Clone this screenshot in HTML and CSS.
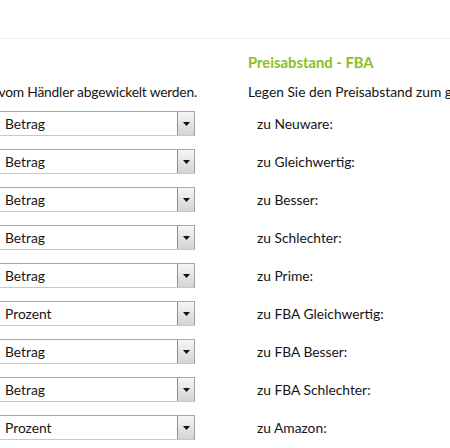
FILE: index.html
```html
<!DOCTYPE html>
<html lang="de">
<head>
<meta charset="utf-8">
<link rel="stylesheet" href="styles.css">
</head>
<body>
<div class="top"></div>
<div class="content">
  <section class="col col-left">
    <div class="heading-space"></div>
    <p class="desc"><span>Legen Sie den Preisabstand zu Angeboten fest, die vom Händler abgewickelt werden.</span></p>
    <div class="rows">
      <div class="select"><span class="val">Betrag</span><span class="btn"><svg width="7" height="4" viewBox="0 0 7 4"><path d="M0 0h7L3.5 4z" fill="#111"/></svg></span></div>
      <div class="select"><span class="val">Betrag</span><span class="btn"><svg width="7" height="4" viewBox="0 0 7 4"><path d="M0 0h7L3.5 4z" fill="#111"/></svg></span></div>
      <div class="select"><span class="val">Betrag</span><span class="btn"><svg width="7" height="4" viewBox="0 0 7 4"><path d="M0 0h7L3.5 4z" fill="#111"/></svg></span></div>
      <div class="select"><span class="val">Betrag</span><span class="btn"><svg width="7" height="4" viewBox="0 0 7 4"><path d="M0 0h7L3.5 4z" fill="#111"/></svg></span></div>
      <div class="select"><span class="val">Betrag</span><span class="btn"><svg width="7" height="4" viewBox="0 0 7 4"><path d="M0 0h7L3.5 4z" fill="#111"/></svg></span></div>
      <div class="select"><span class="val">Prozent</span><span class="btn"><svg width="7" height="4" viewBox="0 0 7 4"><path d="M0 0h7L3.5 4z" fill="#111"/></svg></span></div>
      <div class="select"><span class="val">Betrag</span><span class="btn"><svg width="7" height="4" viewBox="0 0 7 4"><path d="M0 0h7L3.5 4z" fill="#111"/></svg></span></div>
      <div class="select"><span class="val">Betrag</span><span class="btn"><svg width="7" height="4" viewBox="0 0 7 4"><path d="M0 0h7L3.5 4z" fill="#111"/></svg></span></div>
      <div class="select"><span class="val">Prozent</span><span class="btn"><svg width="7" height="4" viewBox="0 0 7 4"><path d="M0 0h7L3.5 4z" fill="#111"/></svg></span></div>
    </div>
  </section>
  <section class="col col-right">
    <h3 class="heading">Preisabstand - FBA</h3>
    <p class="desc">Legen Sie den Preisabstand zum günstigsten Angebot fest, das von Amazon versendet wird.</p>
    <div class="rows">
      <div class="label">zu Neuware:</div>
      <div class="label">zu Gleichwertig:</div>
      <div class="label">zu Besser:</div>
      <div class="label">zu Schlechter:</div>
      <div class="label">zu Prime:</div>
      <div class="label">zu FBA Gleichwertig:</div>
      <div class="label">zu FBA Besser:</div>
      <div class="label">zu FBA Schlechter:</div>
      <div class="label">zu Amazon:</div>
    </div>
  </section>
</div>
</body>
</html>
```

FILE: styles.css
```css
html, body {
  margin: 0;
  padding: 0;
  background: #fff;
  overflow: hidden;
  width: 450px;
  height: 448px;
}
body {
  font-family: "Lato", "Liberation Sans", sans-serif;
  font-size: 13.8px;
  color: #151515;
}
.top {
  height: 38px;
  border-bottom: 1px solid #eeeeee;
}
.content {
  display: flex;
  gap: 53px;
  margin-left: -260px;
  padding-top: 13px;
}
.col {
  flex: none;
  display: flex;
  flex-direction: column;
}
.col-left {
  width: 455px;
}
.col-right {
  width: 500px;
}
.heading-space {
  height: 20px;
}
.heading {
  margin: 0;
  height: 20px;
  line-height: 20px;
  font-size: 14.8px;
  font-weight: bold;
  white-space: nowrap;
  color: #8cc01e;
}
.desc {
  margin: 10px 0 9px;
  height: 20px;
  line-height: 20px;
  white-space: nowrap;
}
.col-left .desc {
  display: flex;
  justify-content: flex-end;
  margin-right: -2px;
  letter-spacing: -0.2px;
}
.col-left .desc span {
  flex: none;
}
.rows {
  display: flex;
  flex-direction: column;
  gap: 13px;
}
.select {
  height: 25px;
  box-sizing: border-box;
  border: 1px solid #c8c8c8;
  border-top-color: #a9a9a9;
  border-right-color: #a0a0a0;
  display: flex;
  align-items: center;
  background: #fff;
}
.val {
  flex: 1;
  padding-left: 264px;
  line-height: 23px;
}
.btn {
  width: 17px;
  height: 23px;
  box-sizing: border-box;
  border-left: 1px solid #8e8e8e;
  background: linear-gradient(#f6f6f6, #d4d4d4);
  display: flex;
  align-items: center;
  justify-content: center;
}
.label {
  height: 25px;
  line-height: 25px;
  padding-left: 9px;
  white-space: nowrap;
}
```
